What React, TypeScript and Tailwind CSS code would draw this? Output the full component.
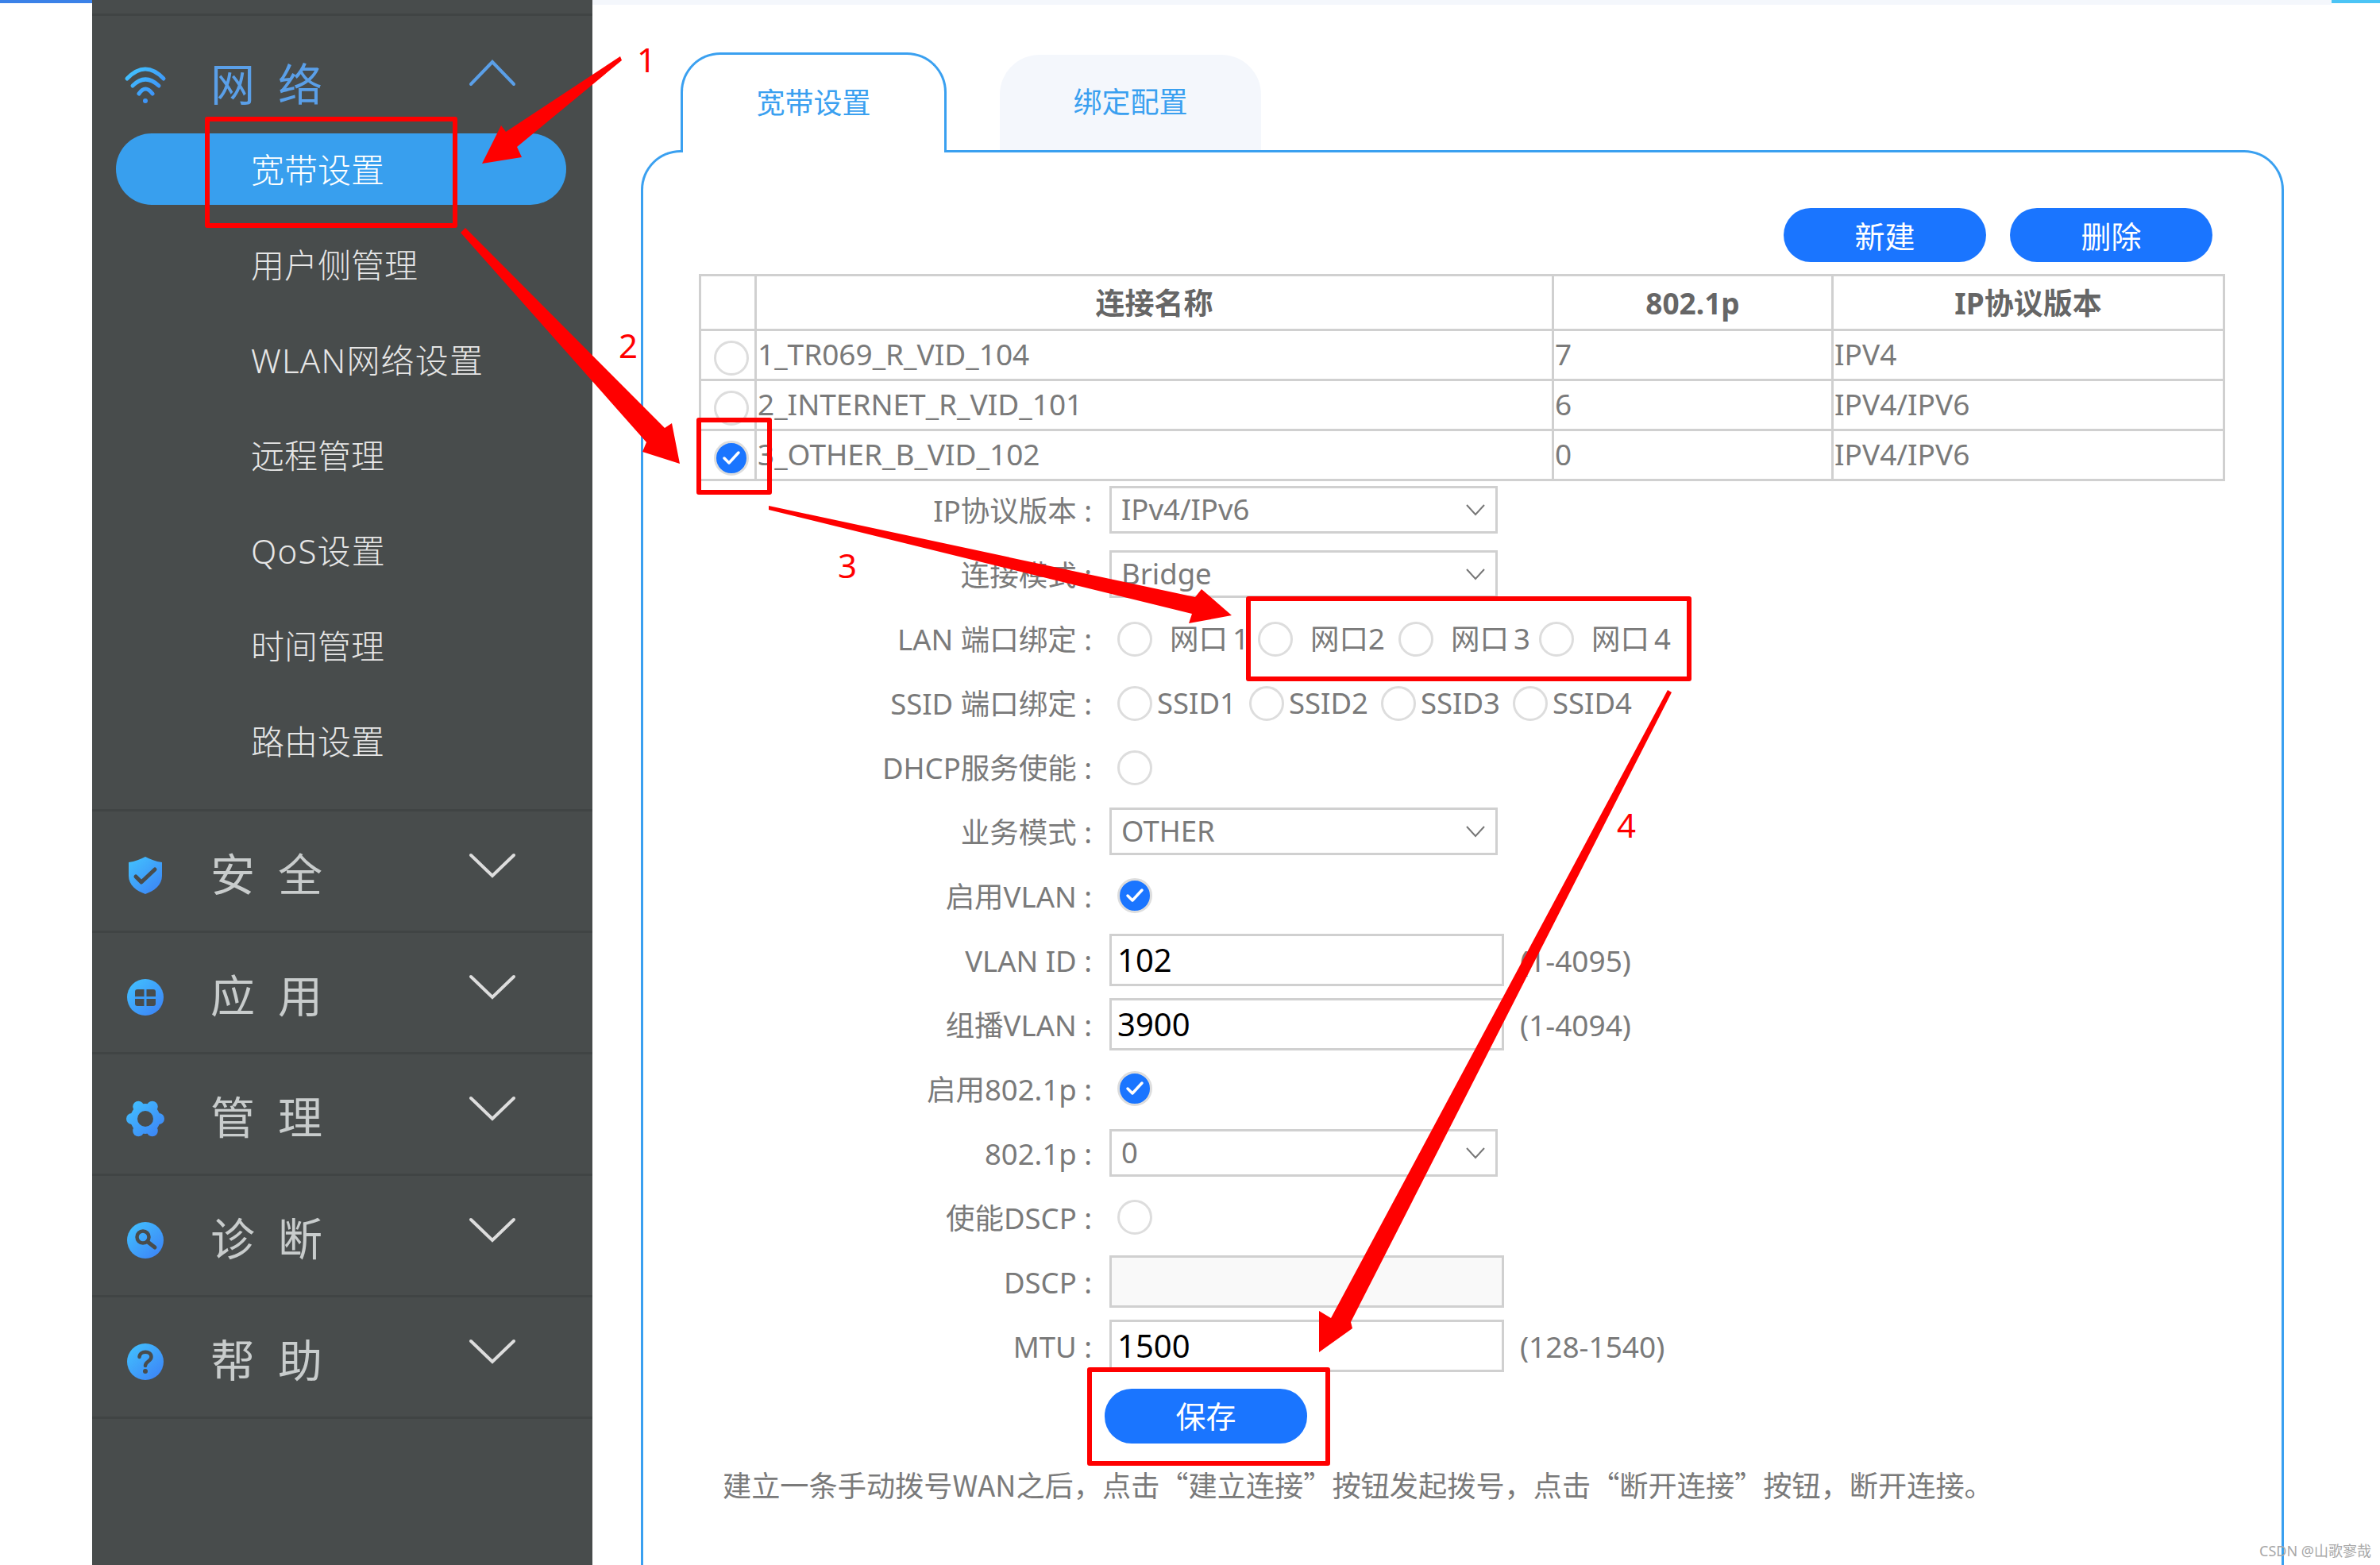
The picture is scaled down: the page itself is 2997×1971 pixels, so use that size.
import type { ReactNode } from 'react';

const subItems = ['宽带设置', '用户侧管理', 'WLAN网络设置', '远程管理', 'QoS设置', '时间管理', '路由设置'];

const rows = [
  { name: '1_TR069_R_VID_104', p: '7', ip: 'IPV4', checked: false },
  { name: '2_INTERNET_R_VID_101', p: '6', ip: 'IPV4/IPV6', checked: false },
  { name: '3_OTHER_B_VID_102', p: '0', ip: 'IPV4/IPV6', checked: true },
];

function Chevron({ up = false, className = '' }: { up?: boolean; className?: string }) {
  return (
    <svg width="60" height="36" viewBox="0 0 60 36" className={className} fill="none" stroke="currentColor" strokeWidth="4" strokeLinecap="round">
      <path d={up ? 'M3 32 L30 4 L57 32' : 'M3 4 L30 30 L57 4'} />
    </svg>
  );
}

function ShieldIcon() {
  return (
    <svg width="60" height="60" viewBox="0 0 60 60">
      <path d="M30 6 C36 9 43 12 51 13 L51 30 C51 42 41 49 30 53 C19 49 9 42 9 30 L9 13 C17 12 24 9 30 6 Z" fill="url(#iconGrad)" />
      <path d="M18 31 L25 38 L42 22" fill="none" stroke="#484c4c" strokeWidth="5" strokeLinecap="round" strokeLinejoin="round" />
    </svg>
  );
}

function AppIcon() {
  return (
    <svg width="60" height="60" viewBox="0 0 60 60">
      <circle cx="30" cy="30" r="23" fill="url(#iconGrad)" />
      <rect x="17" y="20" width="26" height="21" rx="3" fill="#484c4c" />
      <path d="M30 20 V41 M17 30.5 H43" stroke="#3d9cf5" strokeWidth="3" />
    </svg>
  );
}

function GearIcon() {
  return (
    <svg width="60" height="60" viewBox="0 0 60 60">
      <g fill="url(#iconGrad)">
        <circle cx="30" cy="30" r="19" />
        <circle cx="47" cy="30" r="7" />
        <circle cx="13" cy="30" r="7" />
        <circle cx="38.75" cy="14.8" r="7" />
        <circle cx="21.25" cy="14.8" r="7" />
        <circle cx="38.75" cy="45.2" r="7" />
        <circle cx="21.25" cy="45.2" r="7" />
      </g>
      <circle cx="30" cy="30" r="10" fill="#484c4c" />
    </svg>
  );
}

function SearchIcon() {
  return (
    <svg width="60" height="60" viewBox="0 0 60 60">
      <circle cx="30" cy="30" r="23" fill="url(#iconGrad)" />
      <circle cx="27" cy="26" r="7.5" fill="none" stroke="#484c4c" strokeWidth="4.5" />
      <path d="M33 32 L42 39" stroke="#484c4c" strokeWidth="5" strokeLinecap="round" />
    </svg>
  );
}

function HelpIcon() {
  return (
    <svg width="60" height="60" viewBox="0 0 60 60">
      <circle cx="30" cy="30" r="23" fill="url(#iconGrad)" />
      <path d="M22.5 24 C23 15.5 37.5 15.5 37.5 24 C37.5 29.5 30 29.5 30 35" fill="none" stroke="#484c4c" strokeWidth="4.5" strokeLinecap="round" />
      <circle cx="30" cy="42" r="3" fill="#484c4c" />
    </svg>
  );
}

const sections = [
  { title: '安全', icon: <ShieldIcon /> },
  { title: '应用', icon: <AppIcon /> },
  { title: '管理', icon: <GearIcon /> },
  { title: '诊断', icon: <SearchIcon /> },
  { title: '帮助', icon: <HelpIcon /> },
];

function Radio({ checked = false }: { checked?: boolean }) {
  if (checked) {
    return (
      <span className="flex h-[44px] w-[44px] shrink-0 items-center justify-center rounded-full border-[3px] border-[#dddddd] bg-[#1a75ff]">
        <svg width="26" height="22" viewBox="0 0 26 22" fill="none" stroke="#ffffff" strokeWidth="3.5" strokeLinecap="round" strokeLinejoin="round">
          <path d="M4 11 L10 17 L22 4" />
        </svg>
      </span>
    );
  }
  return <span className="block h-[44px] w-[44px] shrink-0 rounded-full border-[3px] border-[#dddddd] bg-white" />;
}

function FormRow({ label, children }: { label: string; children: ReactNode }) {
  return (
    <div className="flex h-[81px] items-center">
      <div className="w-[495px] whitespace-pre pt-[3px] text-right">{label}</div>
      <div className="ml-[22px] flex items-center">{children}</div>
    </div>
  );
}

function SelectBox({ value }: { value: string }) {
  return (
    <div className="flex h-[60px] w-[489px] items-center justify-between border-[3px] border-[#d0d0d0] pl-[12px] pr-[12px]">
      <span>{value}</span>
      <svg width="26" height="16" viewBox="0 0 26 16" fill="none" stroke="#777777" strokeWidth="2">
        <path d="M2 2 L13 14 L24 2" />
      </svg>
    </div>
  );
}

function TextBox({ value = '', hint, disabled = false }: { value?: string; hint?: string; disabled?: boolean }) {
  return (
    <>
      <input
        defaultValue={value}
        disabled={disabled}
        className={`h-[66px] w-[497px] border-[3px] border-[#d0d0d0] pl-[7px] text-[40px] text-black outline-none ${disabled ? 'bg-[#f9f9f9]' : 'bg-white'}`}
      />
      {hint && <span className="ml-[20px] pt-[2px] text-[37px]">{hint}</span>}
    </>
  );
}

function Annotations() {
  return (
    <>
      <svg className="pointer-events-none absolute left-0 top-0" width="2997" height="1971" viewBox="0 0 2997 1971">
        <g fill="none" stroke="#ff0000" strokeWidth="6" strokeLinejoin="round">
          <rect x="261" y="150" width="312" height="134" />
          <rect x="880" y="529" width="89" height="91" />
          <rect x="1572" y="754" width="555" height="101" />
          <rect x="1372" y="1725" width="300" height="118" />
        </g>
        <g fill="#ff0000">
          <polygon points="781,71 637,166 631,158 607,206 657,198 651,185 783,76" />
          <polygon points="580,293 586,287 837,539 846,533 856,584 809,569 814,557" />
          <polygon points="968,637 1505,752 1513,742 1551,775 1497,785 1501,773 968,642" />
          <polygon points="2100,869 2105,872 1701,1665 1703,1673 1661,1703 1661,1651 1676,1660" />
        </g>
      </svg>
      <span className="absolute left-[802px] top-[50px] text-[42px] leading-[50px] text-[#ff0000]">1</span>
      <span className="absolute left-[779px] top-[410px] text-[42px] leading-[50px] text-[#ff0000]">2</span>
      <span className="absolute left-[1055px] top-[687px] text-[42px] leading-[50px] text-[#ff0000]">3</span>
      <span className="absolute left-[2036px] top-[1014px] text-[42px] leading-[50px] text-[#ff0000]">4</span>
      <span className="absolute left-[2845px] top-[1941px] whitespace-nowrap text-[18px] leading-[24px] text-[#a8a8a8]">CSDN @山歌寥哉</span>
    </>
  );
}

export default function App() {
  return (
    <div className="relative flex h-[1971px] w-[2997px] overflow-hidden bg-white font-['Noto_Sans','Noto_Sans_CJK_SC',sans-serif] text-[36.5px] text-[#7a7a7a]">
      <svg className="absolute h-0 w-0">
        <defs>
          <linearGradient id="iconGrad" gradientUnits="userSpaceOnUse" x1="8" y1="6" x2="52" y2="54">
            <stop offset="0" stopColor="#42c4ff" />
            <stop offset="1" stopColor="#3c7ff5" />
          </linearGradient>
        </defs>
      </svg>

      <div className="w-[116px] shrink-0">
        <div className="h-[4px] bg-[#3b82e8]" />
      </div>

      {/* sidebar */}
      <div className="flex w-[630px] shrink-0 flex-col bg-[#484c4c]">
        <div className="h-[20px] border-b-[3px] border-[#404444]" />
        <div className="border-b-[3px] border-[#404444] pb-[41px]">
          <div className="flex h-[148px] items-center pl-[37px] pt-[22px] text-[#5a9fe8]">
            <svg width="60" height="52" viewBox="0 0 60 52" className="mt-[6px]" fill="none" stroke="url(#iconGrad)" strokeWidth="5" strokeLinecap="round">
              <path d="M7 17 Q30 -7 53 17" />
              <path d="M14 26 Q30 10 47 26" />
              <path d="M22 36 Q30 24 39 36" />
              <circle cx="30" cy="45" r="3" fill="url(#iconGrad)" stroke="none" />
            </svg>
            <span className="ml-[52px] text-[56px] tracking-[29px]">网络</span>
            <Chevron up className="mb-[26px] ml-auto mr-[96px]" />
          </div>
          <div className="ml-[30px] flex w-[567px] flex-col gap-[30px]">
            {subItems.map((item, i) => (
              <div
                key={item}
                className={`flex h-[90px] items-center rounded-[45px] pl-[170px] text-[42px] font-light ${i === 0 ? 'bg-[#389fee] text-white' : 'text-[#e6e6e6]'} ${/[A-Za-z]/.test(item) ? 'tracking-[1.2px]' : ''}`}
              >
                {item}
              </div>
            ))}
          </div>
        </div>
        {sections.map(section => (
          <div key={section.title} className="flex h-[153px] items-center border-b-[3px] border-[#404444] pl-[37px] text-[#c8cccc]">
            <div className="mt-[12px] h-[60px] w-[60px]">{section.icon}</div>
            <span className="ml-[52px] mt-[6px] text-[56px] tracking-[29px]">{section.title}</span>
            <Chevron className="mb-[12px] ml-auto mr-[96px] text-[#dddddd]" />
          </div>
        ))}
      </div>

      {/* content */}
      <div className="flex min-w-0 flex-1 flex-col">
        <div className="flex h-[6px] items-start">
          <div className="h-[6px] w-[2190px] bg-[#f4f7fc]" />
          <div className="h-[4px] flex-1 bg-[#4cc4f5]" />
        </div>

        <div className="relative z-10 -mb-[3px] mt-[60px] flex items-end gap-[67px] pl-[111px] text-[36px] text-[#3aa0f0]">
          <div className="flex h-[126px] w-[335px] items-center justify-center rounded-t-[50px] border-[3px] border-b-0 border-[#3aa0f0] bg-white pb-[2px]">宽带设置</div>
          <div className="mb-[3px] flex h-[120px] w-[329px] items-center justify-center rounded-t-[50px] bg-[#f4f7fc]">绑定配置</div>
        </div>

        <div className="ml-[61px] w-[2069px] flex-1 rounded-t-[50px] border-[3px] border-b-0 border-[#3aa0f0] pl-[70px] pr-[87px] pt-[70px]">
          <div className="flex justify-end gap-[30px]">
            <button className="h-[68px] w-[255px] rounded-[34px] bg-[#1a75ff] pt-[2px] text-[38px] text-white">新建</button>
            <button className="h-[68px] w-[255px] rounded-[34px] bg-[#1a75ff] pt-[2px] text-[38px] text-white">删除</button>
          </div>

          <table className="mt-[15px] w-[1919px] table-fixed border-collapse text-[37px]">
            <colgroup>
              <col className="w-[70px]" />
              <col className="w-[1004px]" />
              <col className="w-[352px]" />
              <col className="w-[493px]" />
            </colgroup>
            <thead>
              <tr className="h-[69px] text-[#666666]">
                <th className="border-[3px] border-[#d0d0d0]" />
                <th className="border-[3px] border-[#d0d0d0] pt-[2px] font-bold">连接名称</th>
                <th className="border-[3px] border-[#d0d0d0] pt-[2px] font-bold">802.1p</th>
                <th className="border-[3px] border-[#d0d0d0] pt-[2px] font-bold">IP协议版本</th>
              </tr>
            </thead>
            <tbody>
              {rows.map(row => (
                <tr key={row.name} className="h-[63px]">
                  <td className="border-[3px] border-[#d0d0d0] pl-[16px] pt-[8px]">
                    <Radio checked={row.checked} />
                  </td>
                  <td className="border-[3px] border-[#d0d0d0] pb-[3px] pl-[1px]">{row.name}</td>
                  <td className="border-[3px] border-[#d0d0d0] pb-[3px] pl-[1px]">{row.p}</td>
                  <td className="border-[3px] border-[#d0d0d0] pb-[3px] pl-[1px]">{row.ip}</td>
                </tr>
              ))}
            </tbody>
          </table>

          <div className="-mt-[5px]">
            <FormRow label="IP协议版本 :"><SelectBox value="IPv4/IPv6" /></FormRow>
            <FormRow label="连接模式 :"><SelectBox value="Bridge" /></FormRow>
            <FormRow label="LAN 端口绑定 :">
              <div className="ml-[10px] mt-[2px] flex items-center">
                {['网口\u20091', '网口2', '网口\u20093', '网口\u20094'].map(port => (
                  <div key={port} className="flex w-[177px] items-center gap-[22px]">
                    <Radio />
                    <span>{port}</span>
                  </div>
                ))}
              </div>
            </FormRow>
            <FormRow label="SSID 端口绑定 :">
              <div className="ml-[10px] mt-[2px] flex items-center">
                {['SSID1', 'SSID2', 'SSID3', 'SSID4'].map(ssid => (
                  <div key={ssid} className="flex w-[166px] items-center gap-[6px]">
                    <Radio />
                    <span>{ssid}</span>
                  </div>
                ))}
              </div>
            </FormRow>
            <FormRow label="DHCP服务使能 :"><div className="ml-[10px] mt-[2px]"><Radio /></div></FormRow>
            <FormRow label="业务模式 :"><SelectBox value="OTHER" /></FormRow>
            <FormRow label="启用VLAN :"><div className="ml-[10px]"><Radio checked /></div></FormRow>
            <FormRow label="VLAN ID :"><TextBox value="102" hint="(1-4095)" /></FormRow>
            <FormRow label="组播VLAN :"><TextBox value="3900" hint="(1-4094)" /></FormRow>
            <FormRow label="启用802.1p :"><div className="ml-[10px]"><Radio checked /></div></FormRow>
            <FormRow label="802.1p :"><SelectBox value="0" /></FormRow>
            <FormRow label="使能DSCP :"><div className="ml-[10px]"><Radio /></div></FormRow>
            <FormRow label="DSCP :"><TextBox disabled /></FormRow>
            <FormRow label="MTU :"><TextBox value="1500" hint="(128-1540)" /></FormRow>
          </div>

          <button className="ml-[511px] mt-[14px] block h-[69px] w-[255px] rounded-[34px] bg-[#1a75ff] text-[38px] text-white">保存</button>
          <p className="ml-[30px] mt-[26px] whitespace-nowrap font-['Noto_Sans_CJK_SC',sans-serif] text-[36.2px] leading-[50px]">
            建立一条手动拨号WAN之后，点击“建立连接”按钮发起拨号，点击“断开连接”按钮，断开连接。
          </p>
        </div>
      </div>

      <Annotations />
    </div>
  );
}
